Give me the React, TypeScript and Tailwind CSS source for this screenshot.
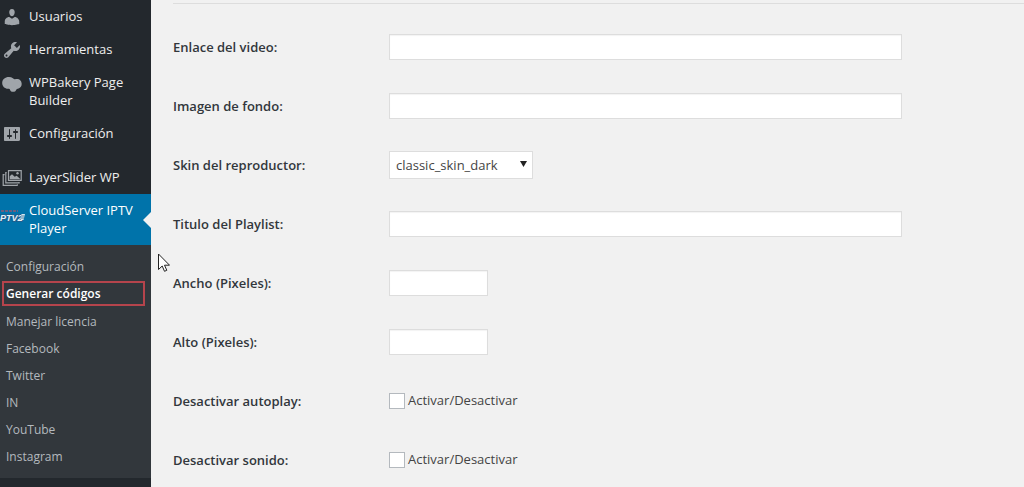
import type { ReactNode } from 'react';

const dashicons = {
  users:
    'M10 9.25c-2.27 0-2.73-3.44-2.73-3.44C7 4.02 7.82 2 9.97 2c2.16 0 2.98 2.02 2.71 3.81 0 0-.41 3.44-2.68 3.44zm0 2.57L12.72 10c2.39 0 4.52 2.33 4.52 4.53v2.49s-3.65 1.13-7.24 1.13c-3.65 0-7.24-1.13-7.24-1.13v-2.49c0-2.25 1.94-4.48 4.47-4.48z',
  tools:
    'M16.68 9.77c-1.34 1.34-3.3 1.67-4.95.99l-5.41 6.52c-.99.99-2.59.99-3.58 0s-.99-2.59 0-3.57l6.52-5.42c-.68-1.65-.35-3.61.99-4.95 1.28-1.28 3.12-1.62 4.72-1.06l-2.89 2.89 2.82 2.82 2.86-2.87c.53 1.58.18 3.39-1.08 4.65zM3.81 16.21c.4.39 1.04.39 1.43 0 .4-.4.4-1.04 0-1.43-.39-.4-1.03-.4-1.43 0-.39.39-.39 1.03 0 1.43z',
  settings:
    'M18 16V4c0-.55-.45-1-1-1H3c-.55 0-1 .45-1 1v12c0 .55.45 1 1 1h13c.55 0 2-.45 2-1zM8 11h1c.55 0 1 .45 1 1s-.45 1-1 1H8v1.5c0 .28-.22.5-.5.5s-.5-.22-.5-.5V13H6c-.55 0-1-.45-1-1s.45-1 1-1h1V5.5c0-.28.22-.5.5-.5s.5.22.5.5V11zm5-2h-1c-.55 0-1-.45-1-1s.45-1 1-1h1V5.5c0-.28.22-.5.5-.5s.5.22.5.5V7h1c.55 0 1 .45 1 1s-.45 1-1 1h-1v5.5c0 .28-.22.5-.5.5s-.5-.22-.5-.5V9z',
};

function Dashicon({ d }: { d: string }) {
  return (
    <svg viewBox="0 0 20 20" className="size-5 fill-[#a0a5aa]" fillRule="evenodd" aria-hidden="true">
      <path d={d} />
    </svg>
  );
}

function BakeryIcon() {
  return (
    <svg viewBox="0 0 20 20" className="size-5 fill-[#a0a5aa]" aria-hidden="true">
      <path d="M7 4C3 4 .2 6.500 .2 10c0 3.500 2.600 5.700 5.800 5.800.8 0 1.400 0 1.800.5.400.9.700 2.500 2.400 2.500h1.900c1.400 0 1.700-1.200 2.300-2.300.4-.6 1-.6 1.600-.8 2.200-.5 3.700-2.300 3.700-4.700 0-2.800-2-4.900-4.700-4.900-1 0-1.700.2-2.400.1C11.200 5.800 10.300 4 7 4z" />
    </svg>
  );
}

function SliderIcon() {
  return (
    <svg viewBox="0 0 20 20" className="size-5" fill="none" stroke="#a0a5aa" strokeWidth="1.200" aria-hidden="true">
      <path d="M6.500 2.600h12.700v9.800H6.500z" />
      <path d="M4.700 4.600H3.800v10.300h13.300v-1" />
      <path d="M2.600 6.700H1.200v10.600h14l.3-1" />
      <path d="M7.700 11.300v-3l2.300-2 2.700 2.400 2-1 3.300 3v.6z" fill="#a0a5aa" stroke="none" />
      <circle cx="15.500" cy="5.300" r="1.200" fill="#a0a5aa" stroke="none" />
    </svg>
  );
}

function IptvLogo() {
  return (
    <svg viewBox="0 0 26 20" className="h-5 w-[26px]" aria-hidden="true">
      <path d="M1 5h17" stroke="#8f5873" strokeWidth="1.500" strokeDasharray="3 1" />
      <text
        x="0"
        y="15"
        className="font-['Liberation_Sans',sans-serif] text-[9px] font-bold italic"
        fill="#e6f2f8"
        stroke="#1f5f8f"
        strokeWidth="2"
        paintOrder="stroke"
      >
        PTV2
      </text>
      <path d="M21.500 8h3.500l-1.500 6h-3z" fill="#d2e6f1" />
      <path d="M21 10h3.500M20.500 12h3.500" stroke="#33698f" strokeWidth="0.800" />
    </svg>
  );
}

interface MenuItemProps {
  icon: ReactNode;
  label: string;
  active?: boolean;
}

function MenuItem({ icon, label, active }: MenuItemProps) {
  return (
    <li>
      <a
        href="#"
        className={`relative flex text-[13px] leading-[18px] ${active ? 'bg-[#0073aa] text-white' : 'text-[#eeeeee]'}`}
      >
        <span className={`flex w-[29px] shrink-0 items-center ${active ? 'h-11' : 'h-[33px] pl-0.5'}`}>{icon}</span>
        <span className="pt-[7px] pb-2">{label}</span>
        {active && (
          <span className="absolute top-1/2 right-0 -translate-y-1/2 border-y-8 border-r-8 border-y-transparent border-r-[#f1f1f1]" />
        )}
      </a>
    </li>
  );
}

const submenu = [
  'Configuración',
  'Generar códigos',
  'Manejar licencia',
  'Facebook',
  'Twitter',
  'IN',
  'YouTube',
  'Instagram',
];

function Sidebar() {
  return (
    <nav className="w-[151px] shrink-0 bg-[#23282d]">
      <ul>
        <MenuItem icon={<Dashicon d={dashicons.users} />} label="Usuarios" />
        <MenuItem icon={<Dashicon d={dashicons.tools} />} label="Herramientas" />
        <MenuItem icon={<BakeryIcon />} label="WPBakery Page Builder" />
        <MenuItem icon={<Dashicon d={dashicons.settings} />} label="Configuración" />
        <li className="h-[11px]" />
        <MenuItem icon={<SliderIcon />} label="LayerSlider WP" />
        <MenuItem active label="CloudServer IPTV Player" icon={<IptvLogo />} />
      </ul>
      <ul className="bg-[#32373c] py-2 text-xs leading-[27px]">
        {submenu.map((label) =>
          label === 'Generar códigos' ? (
            <li key={label} className="pt-px pr-1.5 pb-0.5 pl-0.5">
              <a href="#" className="block border-2 border-[#b5444c] pl-0.5 leading-[21px] font-semibold text-white">
                {label}
              </a>
            </li>
          ) : (
            <li key={label}>
              <a href="#" className="block pl-1.5 text-[#b4b9be]">
                {label}
              </a>
            </li>
          ),
        )}
      </ul>
    </nav>
  );
}

interface RowProps {
  id: string;
  label: string;
  children: ReactNode;
}

function Row({ id, label, children }: RowProps) {
  return (
    <div className="flex h-7 items-center">
      <label htmlFor={id} className="w-[216px] shrink-0 pt-0.5 font-semibold text-[#32373c]">
        {label}
      </label>
      {children}
    </div>
  );
}

function TextInput({ id, small }: { id: string; small?: boolean }) {
  return (
    <input
      id={id}
      type="text"
      className={`h-[26px] border border-[#dddddd] bg-white px-1.5 inset-shadow-xs ${small ? 'w-[99px]' : 'w-full max-w-[513px]'}`}
    />
  );
}

function Toggle({ id }: { id: string }) {
  return (
    <label className="flex items-center gap-[3px] text-[#444444]">
      <input id={id} type="checkbox" className="size-4 appearance-none border border-[#b4b9be] bg-white" />
      Activar/Desactivar
    </label>
  );
}

export default function App() {
  return (
    <div className="relative flex min-h-screen bg-[#f1f1f1] font-['Open_Sans','Noto_Sans',sans-serif] text-[13px]">
      <Sidebar />
      <main className="min-w-0 flex-1 pt-[3px] pl-[22px]">
        <hr className="border-[#dddddd]" />
        <form className="flex flex-col gap-[31px] pt-[29px] pr-5">
          <Row id="video" label="Enlace del video:">
            <TextInput id="video" />
          </Row>
          <Row id="background" label="Imagen de fondo:">
            <TextInput id="background" />
          </Row>
          <Row id="skin" label="Skin del reproductor:">
            <span className="relative">
              <select
                id="skin"
                className="h-7 w-36 appearance-none border border-[#dddddd] bg-white pt-px pl-1.5 text-[#444444]"
              >
                <option>classic_skin_dark</option>
              </select>
              <svg viewBox="0 0 7 6" className="pointer-events-none absolute top-2.5 right-1.5 h-1.5 w-[7px]" aria-hidden="true">
                <path d="M0 0h7L3.500 6z" fill="#222222" />
              </svg>
            </span>
          </Row>
          <Row id="title" label="Titulo del Playlist:">
            <TextInput id="title" />
          </Row>
          <Row id="width" label="Ancho (Pixeles):">
            <TextInput id="width" small />
          </Row>
          <Row id="height" label="Alto (Pixeles):">
            <TextInput id="height" small />
          </Row>
          <Row id="autoplay" label="Desactivar autoplay:">
            <Toggle id="autoplay" />
          </Row>
          <Row id="mute" label="Desactivar sonido:">
            <Toggle id="mute" />
          </Row>
        </form>
      </main>
      {/* Mouse pointer */}
      <svg viewBox="0 0 12 19" className="absolute top-[253px] left-[158px] h-[19px] w-3" aria-hidden="true">
        <path d="M.5 1v15.500l3.700-3.500 2.300 5.300 2.300-1-2.300-5.100h5z" fill="#ffffff" stroke="#222222" />
      </svg>
    </div>
  );
}
